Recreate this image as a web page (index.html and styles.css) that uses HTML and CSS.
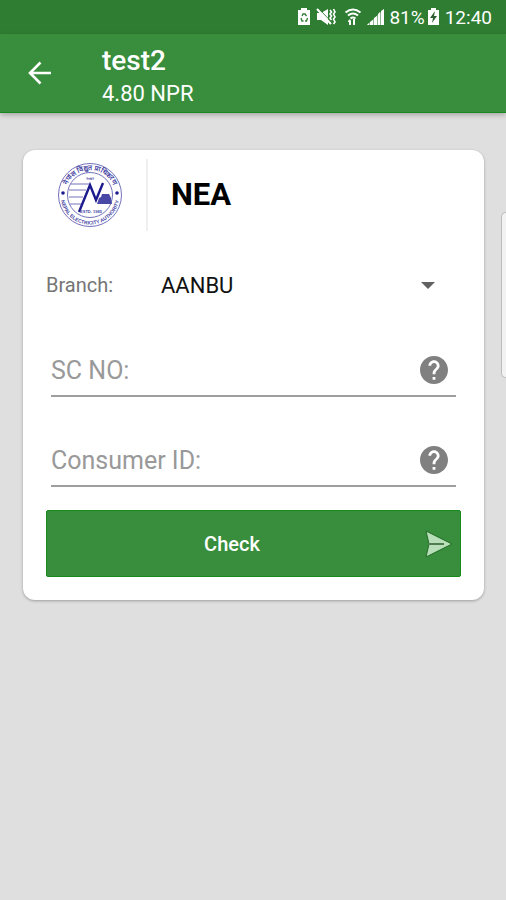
FILE: index.html
```html
<!DOCTYPE html>
<html lang="en">
<head>
    <meta charset="UTF-8">
    <meta name="viewport" content="width=device-width, initial-scale=1.0">
    <title>NEA Bill Payment</title>
    <link rel="stylesheet" href="styles.css">
</head>
<body>

    <div class="statusbar">
        <svg width="14" height="20" viewBox="0 0 14 20">
            <path fill="#fff" d="M4 1h6v2h3v15H1V3h3z"/>
            <path fill="none" stroke="#2e7d32" stroke-width="1.300" d="M5 9l1-2h2l1.500 2M4 11l1 3h1.500M8 14h1.500l1-3"/>
        </svg>
        <svg class="mute" width="20" height="20" viewBox="0 0 20 20">
            <path fill="#fff" d="M1 6h4l7-4v16l-7-5H1z"/>
            <path stroke="#2e7d32" d="M3 2l12 12.500"/>
            <path stroke="#fff" stroke-width="2" d="M1 2l14 15"/>
            <path fill="none" stroke="#fff" stroke-width="1.600" d="M14 3l1.500 2-1.500 2 1.500 2-1.500 2 1.500 2M17.500 2l1.500 3-1.500 2 1.500 3-1.500 2 1.500 3-1.500 2"/>
        </svg>
        <svg class="wifi" width="18" height="20" viewBox="0 0 18 20">
            <path fill="none" stroke="#fff" stroke-width="2" d="M1.500 5.500q7.500-6 15 0M4 8.500q5-4 10 0M6.500 11.500q2.500-2 5 0"/>
            <path fill="#fff" d="M9 12h2v6H9zM4 14l2-2 1 2v4H5v-3H4z"/>
        </svg>
        <svg class="signal" width="19" height="20" viewBox="0 0 19 20">
            <path fill="#fff" fill-opacity="0.450" d="M1 18L17 3v15z"/>
            <path fill="#fff" d="M1 18l2-2v2zM4 18v-3l3-2v5zM8 18v-7l3-2v9zM12 18V7l2-2v13zM15 18V4l3-2v16z"/>
        </svg>
        <span>81%</span>
        <svg class="battery" width="13" height="20" viewBox="0 0 13 20">
            <path fill="#fff" d="M4 1h5v2h3v15H1V3h3z"/>
            <path fill="#2e5f32" d="M8 4l-5 7h3l-1 5 5-7H7z"/>
        </svg>
        <span>12:40</span>
    </div>

    <header class="toolbar">
        <button class="back" aria-label="Back">
            <svg width="24" height="24" viewBox="0 0 24 24">
                <path fill="none" stroke="#fff" stroke-width="2.600" d="M23 12H3M12.500 1.500L2 12l10.500 10.500"/>
            </svg>
        </button>
        <div class="account">
            <h1>test2</h1>
            <p>4.80 NPR</p>
        </div>
    </header>

    <main>
        <form class="card">
            <div class="provider">
                <svg class="logo" width="66" height="66" viewBox="0 0 66 66" role="img" aria-label="Nepal Electricity Authority">
                    <defs>
                        <path id="top" d="M8 33a25 25 0 0 1 50 0"/>
                        <path id="bottom" d="M3.500 33a29.500 29.500 0 0 0 59 0"/>
                    </defs>
                    <g fill="none" stroke="#7472bb">
                        <circle cx="33" cy="33" r="31.500"/>
                        <circle cx="33" cy="33" r="22.500"/>
                        <path d="M14 22h18M12 28h17M12 35h14M13 42h11"/>
                    </g>
                    <path fill="#4a48a6" d="M40 42l2-6 2-1 1-3h7l2 4 1 6z"/>
                    <path fill="none" stroke="#1c1a8c" stroke-width="2.400" d="M22 50l11-27 6 15 7-17"/>
                    <circle cx="6" cy="31" r="1.800" fill="#1c1a8c"/>
                    <circle cx="60" cy="31" r="1.800" fill="#1c1a8c"/>
                    <g class="seal" text-anchor="middle">
                        <text class="wide"><textPath href="#top" startOffset="50%">नेपाल विद्युत प्राधिकरण</textPath></text>
                        <text><textPath href="#bottom" startOffset="50%">NEPAL ELECTRICITY AUTHORITY</textPath></text>
                        <text class="small" x="33" y="18">२०४२</text>
                        <text class="small" x="34" y="51">ESTD. 1985</text>
                    </g>
                </svg>
                <h2>NEA</h2>
            </div>

            <div class="branch">
                <label for="branch">Branch:</label>
                <div class="picker">
                    <select id="branch">
                        <option>AANBU</option>
                    </select>
                    <svg width="14" height="7" viewBox="0 0 14 7">
                        <path fill="#616161" d="M0 0h14L7 7z"/>
                    </svg>
                </div>
            </div>

            <div class="field">
                <input type="text" id="scno" aria-label="SC NO" placeholder="SC NO:">
                <button type="button" class="help" aria-label="Help for SC NO">
                    <svg width="28" height="28" viewBox="2 2 20 20">
                        <path fill="#808080" d="M12 2C6.480 2 2 6.480 2 12s4.480 10 10 10 10-4.480 10-10S17.520 2 12 2zm1 17h-2v-2h2v2zm2.070-7.750l-.9.920C13.450 12.900 13 13.500 13 15h-2v-.5c0-1.100.450-2.100 1.170-2.830l1.240-1.260c.370-.360.590-.860.590-1.410 0-1.100-.9-2-2-2s-2 .9-2 2H8c0-2.210 1.790-4 4-4s4 1.790 4 4c0 .880-.360 1.680-.930 2.250z"/>
                    </svg>
                </button>
            </div>

            <div class="field">
                <input type="text" id="consumer" aria-label="Consumer ID" placeholder="Consumer ID:">
                <button type="button" class="help" aria-label="Help for Consumer ID">
                    <svg width="28" height="28" viewBox="2 2 20 20">
                        <path fill="#808080" d="M12 2C6.480 2 2 6.480 2 12s4.480 10 10 10 10-4.480 10-10S17.520 2 12 2zm1 17h-2v-2h2v2zm2.070-7.750l-.9.920C13.450 12.900 13 13.500 13 15h-2v-.5c0-1.100.450-2.100 1.170-2.830l1.240-1.260c.370-.360.590-.860.590-1.410 0-1.100-.9-2-2-2s-2 .9-2 2H8c0-2.210 1.790-4 4-4s4 1.790 4 4c0 .880-.360 1.680-.930 2.250z"/>
                    </svg>
                </button>
            </div>

            <button type="submit" class="check">
                <span>Check</span>
                <svg width="28" height="28" viewBox="0 0 28 28">
                    <path fill="#b9dfba" stroke="#1f6b24" d="M1 1l26 13L1 27l3-13z"/>
                    <path stroke="#4f7d50" stroke-width="2" d="M3 14h16"/>
                </svg>
            </button>
        </form>
    </main>

    <div class="edge-handle"></div>

</body>
</html>
```
FILE: styles.css
```css
* {
    box-sizing: border-box;
}
body {
    margin: 0;
    min-height: 100vh;
    font-family: Roboto, Arial, sans-serif;
    background-color: #dfdfdf;
    overflow-x: hidden;
}
h1, h2, p {
    margin: 0;
}
svg {
    display: block;
    flex: none;
}
button {
    padding: 0;
    border: none;
    background: none;
    font-family: inherit;
}
.statusbar {
    display: flex;
    align-items: center;
    justify-content: flex-end;
    height: 34px;
    padding-right: 14px;
    background-color: #2e7d32;
    color: white;
    font-size: 19px;
}
.mute {
    margin-left: 5px;
}
.wifi {
    margin-left: 8px;
}
.signal {
    margin: 0 4px 0 4px;
}
.battery {
    margin: 0 5px 0 2px;
}
.toolbar {
    display: flex;
    align-items: center;
    height: 79px;
    padding-left: 28px;
    background-color: #388e3c;
    border-bottom: 1px solid #1a861e;
    box-shadow: 0 2px 5px rgba(0, 0, 0, 0.25);
    color: white;
}
.account {
    margin-left: 50px;
    padding-top: 8px;
}
.account h1 {
    font-size: 28px;
    font-weight: 500;
    line-height: 33px;
}
.account p {
    font-size: 22px;
    line-height: 33px;
}
main {
    padding: 37px 22px 0 23px;
}
.card {
    padding: 10px 23px 23px;
    background-color: white;
    border-radius: 12px;
    box-shadow: 0 1px 3px rgba(0, 0, 0, 0.3);
}
.provider {
    display: flex;
    align-items: center;
    height: 70px;
    padding-left: 11px;
}
.provider h2 {
    margin-left: 23px;
    padding-left: 23px;
    border-left: 2px solid #f0f0f0;
    font-size: 31px;
    line-height: 72px;
}
.seal {
    fill: #4a48a6;
    font-family: "Liberation Sans", sans-serif;
    font-size: 5px;
    font-weight: bold;
}
.seal .wide {
    font-size: 7px;
}
.seal .small {
    font-size: 4px;
}
.branch {
    display: flex;
    align-items: center;
    height: 40px;
    margin: 35px 0 40px;
    color: #757575;
    font-size: 20px;
}
.branch label {
    width: 115px;
}
.picker {
    display: flex;
    flex: 1;
    align-items: center;
    padding-right: 26px;
}
.picker select {
    flex: 1;
    height: 40px;
    padding: 0;
    border: none;
    background: none;
    appearance: none;
    color: #111;
    font-family: inherit;
    font-size: 22px;
}
.picker svg {
    pointer-events: none;
}
.field {
    display: flex;
    align-items: center;
    height: 52px;
    margin: 0 5px 38px;
    padding-right: 8px;
    border-bottom: 2px solid #9e9e9e;
}
.field input {
    flex: 1;
    min-width: 0;
    padding: 0;
    border: none;
    outline: none;
    background: none;
    color: #212121;
    font-family: inherit;
    font-size: 25px;
}
.field input::placeholder {
    color: #999;
}
.check {
    display: flex;
    align-items: center;
    gap: 8px;
    width: 100%;
    height: 67px;
    margin-top: -15px;
    padding-right: 7px;
    border: 1px solid #168a1b;
    border-radius: 2px;
    background-color: #388e3c;
    color: white;
    font-size: 20px;
    font-weight: 500;
}
.check span {
    flex: 1;
}
.edge-handle {
    position: absolute;
    top: 212px;
    right: 0;
    width: 5px;
    height: 166px;
    border: 1px solid #bdbdbd;
    border-right: none;
    border-radius: 6px 0 0 6px;
    background-color: #f2f2f2;
}
```
